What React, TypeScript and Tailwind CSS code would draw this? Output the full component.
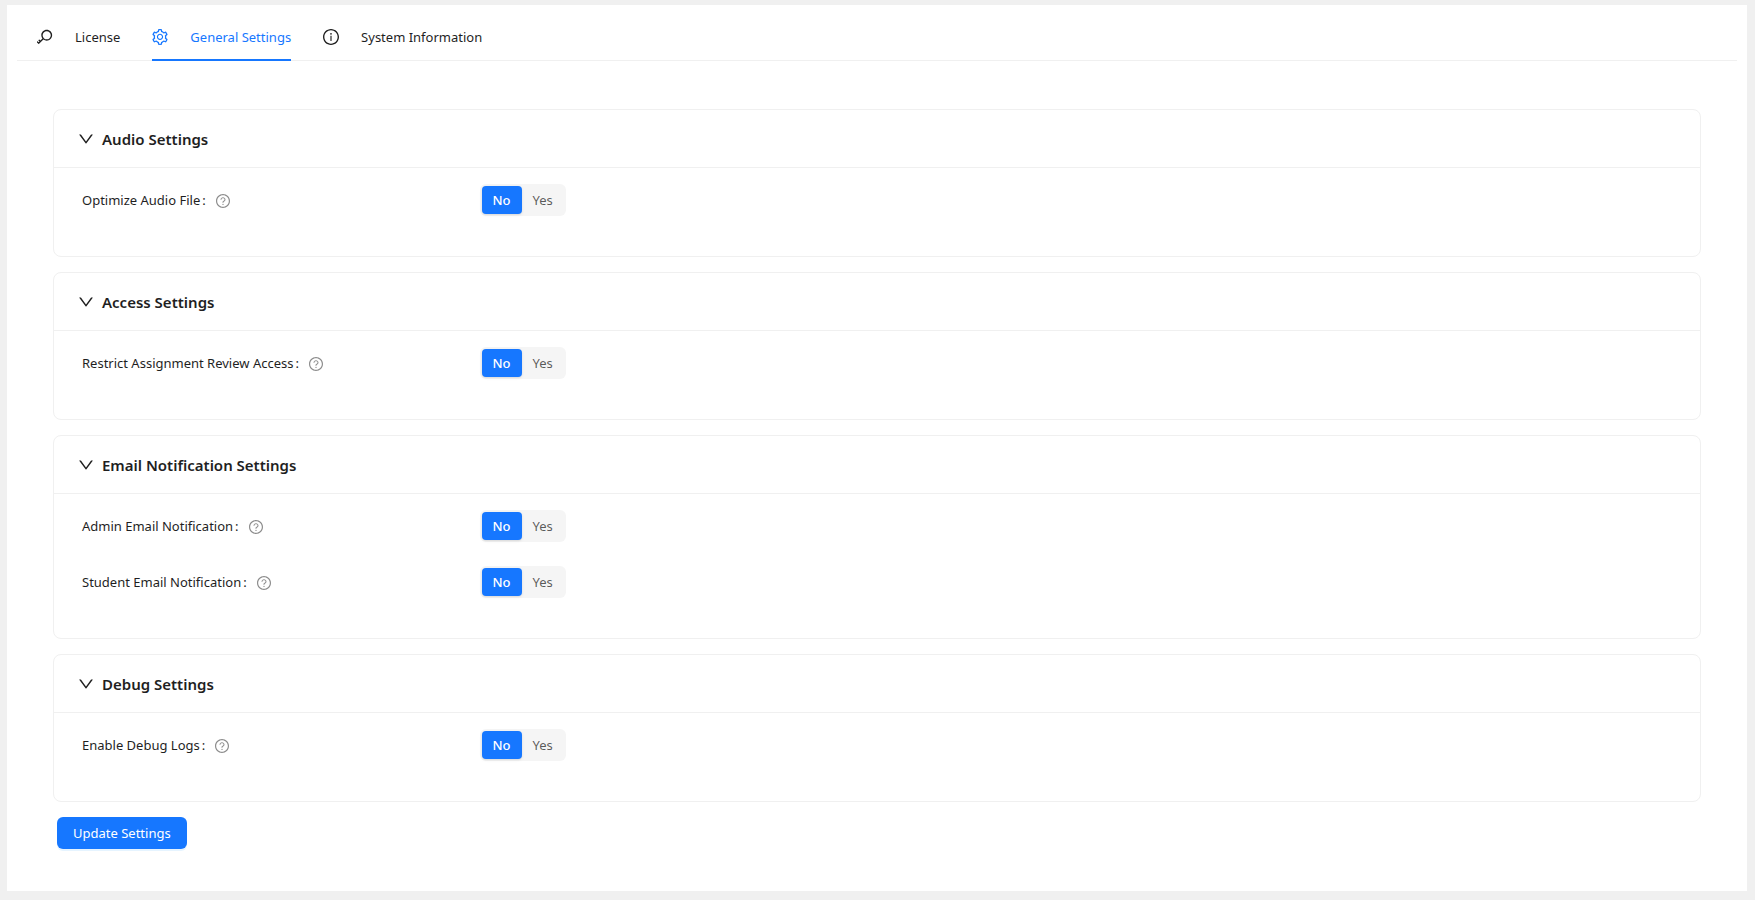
import { useState } from "react";
import type { IconType } from "react-icons";
import {
  AiOutlineDown,
  AiOutlineInfoCircle,
  AiOutlineKey,
  AiOutlineQuestionCircle,
  AiOutlineSetting,
} from "react-icons/ai";

type Option = { name: string; label: string };
type Section = { title: string; options: Option[] };

// Trims the blank margin that the icons carry around their strokes.
const ICON_BOX = "64 64 896 896";

const tabs: { label: string; icon: IconType }[] = [
  { label: "License", icon: AiOutlineKey },
  { label: "General Settings", icon: AiOutlineSetting },
  { label: "System Information", icon: AiOutlineInfoCircle },
];

const sections: Section[] = [
  { title: "Audio Settings", options: [{ name: "optimizeAudio", label: "Optimize Audio File" }] },
  { title: "Access Settings", options: [{ name: "restrictReview", label: "Restrict Assignment Review Access" }] },
  {
    title: "Email Notification Settings",
    options: [
      { name: "adminEmail", label: "Admin Email Notification" },
      { name: "studentEmail", label: "Student Email Notification" },
    ],
  },
  { title: "Debug Settings", options: [{ name: "debugLogs", label: "Enable Debug Logs" }] },
];

function YesNo({ name }: { name: string }) {
  const [value, setValue] = useState("No");
  return (
    <div
      role="radiogroup"
      aria-labelledby={`${name}-label`}
      className="flex h-8 rounded-md bg-[#f5f5f5] p-[2px]"
    >
      {["No", "Yes"].map((choice) => (
        <label
          key={choice}
          className="relative flex cursor-pointer items-center rounded px-[11px] pt-px text-black/65 has-checked:bg-[#1677ff] has-checked:font-medium has-checked:text-white has-checked:shadow-sm"
        >
          <input
            type="radio"
            name={name}
            value={choice}
            checked={value === choice}
            onChange={() => setValue(choice)}
            className="sr-only"
          />
          {choice}
        </label>
      ))}
    </div>
  );
}

function SettingRow({ name, label }: Option) {
  return (
    <div className="mb-6 grid grid-cols-4">
      <div className="flex h-8 items-center whitespace-nowrap pt-px">
        <span id={`${name}-label`}>{label}</span>
        <span className="ml-[2px] mr-[10px]">:</span>
        <AiOutlineQuestionCircle viewBox={ICON_BOX} className="size-[14px] text-black/45" />
      </div>
      <div className="col-span-3 flex">
        <YesNo name={name} />
      </div>
    </div>
  );
}

function SettingsCard({ title, options }: Section) {
  const [open, setOpen] = useState(true);
  return (
    <section className="rounded-lg border border-[#f0f0f0]">
      <h2>
        <button
          type="button"
          aria-expanded={open}
          onClick={() => setOpen(!open)}
          className="flex h-[58px] w-full items-center gap-2 border-b border-[#f0f0f0] px-6 pt-px text-[15px] font-semibold"
        >
          <AiOutlineDown viewBox={ICON_BOX} className="size-4" />
          {title}
        </button>
      </h2>
      {open && (
        <div className="px-7 py-4">
          {options.map((option) => (
            <SettingRow key={option.name} {...option} />
          ))}
        </div>
      )}
    </section>
  );
}

export default function App() {
  const [active, setActive] = useState("General Settings");
  return (
    <div className="min-h-screen bg-[#f0f0f0] pb-[9px] pl-[7px] pr-2 pt-[5px] font-['Noto_Sans',sans-serif] text-[13px] text-[#1f1f1f]">
      <main className="bg-white px-[10px] pb-[42px] pt-[10px]">
        <div role="tablist" className="flex gap-8 border-b border-[#f0f0f0] px-5">
          {tabs.map(({ label, icon: Icon }) => (
            <button
              key={label}
              type="button"
              role="tab"
              aria-selected={active === label}
              onClick={() => setActive(label)}
              className="-mb-px flex h-[46px] items-center gap-[22px] border-b-2 border-transparent aria-selected:border-[#1677ff] aria-selected:text-[#1677ff]"
            >
              <Icon viewBox={ICON_BOX} className="size-4" />
              <span className="pt-[2px]">{label}</span>
            </button>
          ))}
        </div>
        <form className="px-9 pt-12" onSubmit={(event) => event.preventDefault()}>
          <div className="flex flex-col gap-[15px]">
            {sections.map((section) => (
              <SettingsCard key={section.title} {...section} />
            ))}
          </div>
          <button
            type="submit"
            className="ml-1 mt-[15px] flex h-8 items-center rounded-md bg-[#1677ff] px-4 pt-px text-white shadow-[0_2px_0_rgba(5,145,255,0.1)]"
          >
            Update Settings
          </button>
        </form>
      </main>
    </div>
  );
}
